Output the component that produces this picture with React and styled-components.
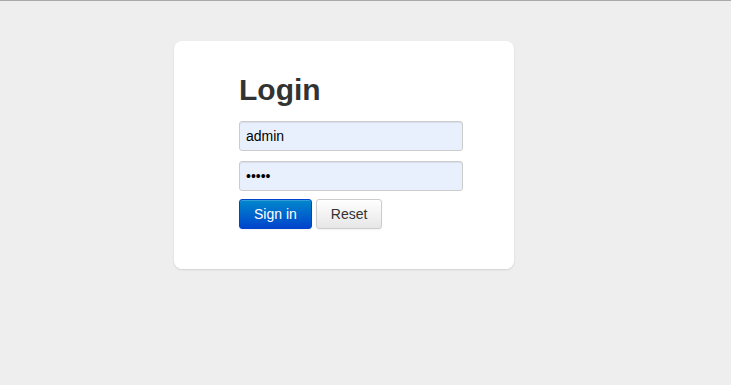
import React from 'react';
import styled, { createGlobalStyle } from 'styled-components';

const GlobalStyle = createGlobalStyle`
  html, body {
    margin: 0;
    padding: 0;
    background: #eeeeee;
    font-family: "Liberation Sans", Arial, sans-serif;
  }
`;

const Page = styled.div`
  min-height: 385px;
  border-top: 1px solid #aaaaaa;
  box-sizing: border-box;
  padding-top: 40px;
  padding-left: 174px;
`;

const Card = styled.div`
  width: 340px;
  box-sizing: border-box;
  padding: 29px 65px 40px;
  background: #ffffff;
  border-radius: 8px;
  box-shadow: 0 1px 2px rgba(0, 0, 0, 0.12);
`;

const Title = styled.h2`
  margin: 0 0 11px;
  font-size: 30px;
  line-height: 40px;
  font-weight: bold;
  color: #333333;
`;

const Fields = styled.div`
  display: flex;
  flex-direction: column;
  gap: 10px;
`;

const Input = styled.input`
  width: 224px;
  height: 30px;
  box-sizing: border-box;
  padding: 4px 6px;
  font-family: inherit;
  font-size: 14px;
  color: #000;
  background: #e8f0fe;
  border: 1px solid #cccccc;
  border-radius: 3px;
  box-shadow: inset 0 1px 1px rgba(0, 0, 0, 0.075);
  outline: none;
`;

const Actions = styled.div`
  display: flex;
  gap: 4px;
  margin-top: 8px;
`;

const Button = styled.button`
  height: 30px;
  box-sizing: border-box;
  padding: 0 14px;
  font-family: inherit;
  font-size: 14px;
  border-radius: 3px;
  cursor: pointer;
  color: ${(p) => (p.$primary ? '#ffffff' : '#333333')};
  background: ${(p) =>
    p.$primary
      ? 'linear-gradient(to bottom, #0088cc, #0044cc)'
      : 'linear-gradient(to bottom, #ffffff, #e6e6e6)'};
  border: 1px solid ${(p) => (p.$primary ? '#0044cc' : '#cccccc')};
  box-shadow: inset 0 1px 0 rgba(255, 255, 255, 0.2), 0 1px 2px rgba(0, 0, 0, 0.05);
`;

export default function App() {
  return (
    <>
      <GlobalStyle />
      <Page>
        <Card>
          <Title>Login</Title>
          <form onSubmit={(e) => e.preventDefault()}>
            <Fields>
              <Input type="text" defaultValue="admin" />
              <Input type="password" defaultValue="admin" />
            </Fields>
            <Actions>
              <Button type="submit" $primary>Sign in</Button>
              <Button type="reset">Reset</Button>
            </Actions>
          </form>
        </Card>
      </Page>
    </>
  );
}
